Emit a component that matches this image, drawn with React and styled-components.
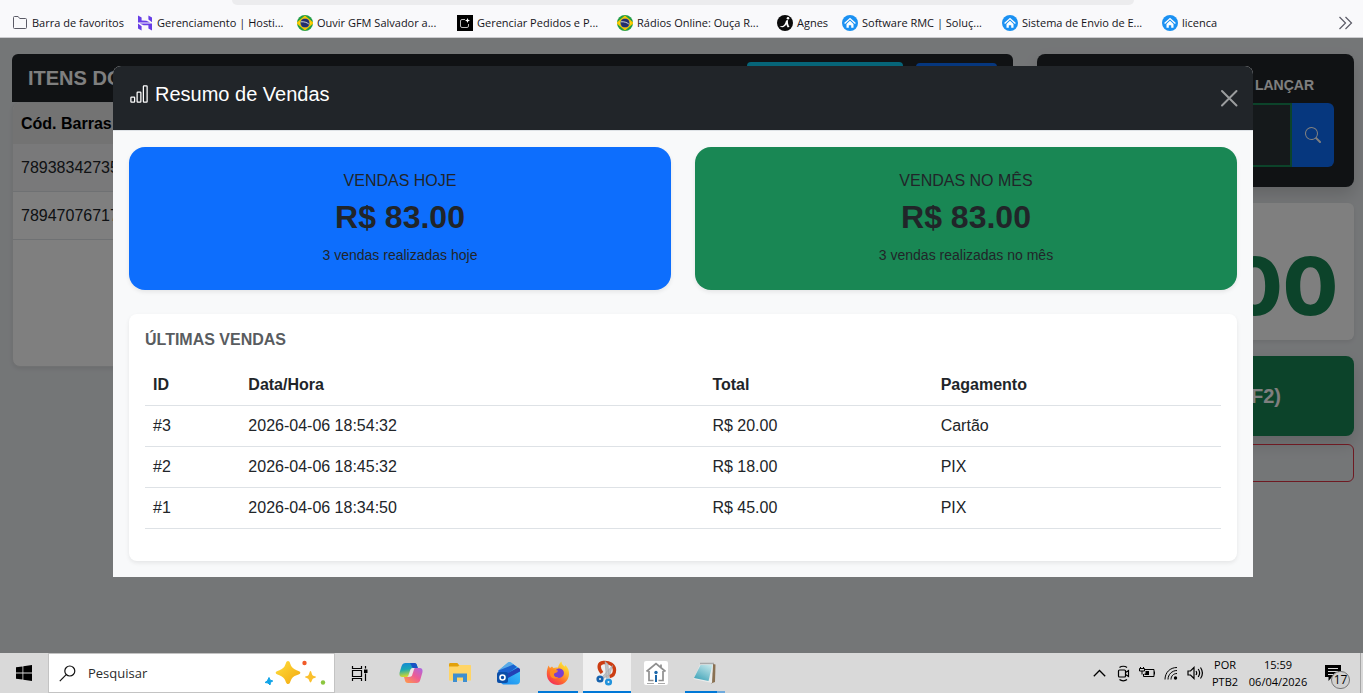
import styled, { createGlobalStyle } from "styled-components";
import { BsBarChart, BsSearch } from "react-icons/bs";

const GlobalStyle = createGlobalStyle`
  *, *::before, *::after {
    box-sizing: border-box;
  }
  body {
    margin: 0;
    font-family: "Liberation Sans", Arial, sans-serif;
    font-size: 16px;
    line-height: 24px;
    color: #212529;
  }
  button, input {
    font: inherit;
  }
  h1, h2, h3, p {
    margin: 0;
  }
`;

const systemFont = `"Open Sans", "Noto Sans", sans-serif`;

const Screen = styled.div`
  display: flex;
  flex-direction: column;
  min-height: 100vh;
`;

/* ---------- bookmarks bar ---------- */

const Browser = styled.header`
  background: #f9f9fb;
  border-bottom: 1px solid #cccccf;
`;

const AddressBar = styled.div`
  height: 5px;
  margin: 0 229px 0 232px;
  border-radius: 0 0 5px 5px;
  background: #ececee;
`;

const Bookmarks = styled.nav`
  display: flex;
  align-items: center;
  height: 32px;
  padding: 4px 10px 0 12px;
`;

const Bookmark = styled.a`
  display: flex;
  flex: none;
  align-items: center;
  gap: 4px;
  width: ${({ $width }) => $width}px;
  font-family: ${systemFont};
  font-size: 11px;
  line-height: 16px;
  color: #15141a;
  text-decoration: none;
  white-space: nowrap;
`;

const MoreBookmarks = styled.button`
  display: flex;
  margin-left: auto;
  padding: 0;
  border: none;
  background: transparent;
`;

/* ---------- sales page ---------- */

const Page = styled.main`
  position: relative;
  flex: 1;
  display: grid;
  grid-template-columns: 1fr 317px;
  align-items: start;
  gap: 24px;
  padding: 16px 9px 16px 12px;
  background: #e9ecef;
`;

const ItemsHeader = styled.div`
  display: flex;
  align-items: center;
  gap: 13px;
  height: 48px;
  padding: 0 16px;
  border-radius: 6px 6px 0 0;
  background: #212529;
`;

const ItemsTitle = styled.h2`
  flex: 1;
  font-size: 20px;
  line-height: 24px;
  color: #fff;
`;

const HeaderBadge = styled.button`
  width: 156px;
  height: 32px;
  border: none;
  border-radius: 4px;
  background: #0dcaf0;
`;

const HeaderButton = styled.button`
  width: 81px;
  height: 30px;
  border: none;
  border-radius: 4px;
  background: #0d6efd;
`;

const ItemsCard = styled.div`
  min-height: 265px;
  border: 1px solid #e0e2e4;
  border-radius: 8px;
  overflow: hidden;
  background: #fff;
  box-shadow: 0 2px 4px rgba(0, 0, 0, 0.08);
`;

const ItemsTable = styled.table`
  width: 100%;
  border-spacing: 0;
  text-align: left;

  th {
    height: 41px;
    padding: 0 8px;
    background: #e6e6e7;
    color: #000;
  }
  td {
    height: 48px;
    padding: 0 8px;
    border-bottom: 1px solid #dee2e6;
  }
  tr:nth-child(odd) td {
    background: #f3f3f4;
  }
`;

const Side = styled.aside`
  display: flex;
  flex-direction: column;
`;

const ScanCard = styled.div`
  padding: 20px;
  margin-bottom: 16px;
  border-radius: 8px;
  background: #212529;
  box-shadow: 0 8px 16px rgba(0, 0, 0, 0.15);
`;

const ScanLabel = styled.label`
  display: block;
  padding: 0 20px 6px 0;
  font-size: 14px;
  font-weight: bold;
  line-height: 23px;
  text-align: right;
  color: #fff;
`;

const ScanGroup = styled.div`
  display: flex;
  height: 64px;
`;

const ScanInput = styled.input`
  flex: 1;
  min-width: 0;
  border: 2px solid #198754;
  border-radius: 6px 0 0 6px;
  background: #2b3337;
  color: #fff;
`;

const ScanButton = styled.button`
  display: flex;
  align-items: center;
  justify-content: center;
  width: 42px;
  border: none;
  border-radius: 0 6px 6px 0;
  background: #0d6efd;
  color: #fff;
`;

const TotalCard = styled.div`
  display: flex;
  align-items: flex-end;
  justify-content: flex-end;
  height: 137px;
  margin-bottom: 16px;
  padding: 0 16px 6px;
  border-radius: 6px;
  background: #fff;
  box-shadow: 0 2px 4px rgba(0, 0, 0, 0.08);
`;

const TotalValue = styled.span`
  font-family: Inter, sans-serif;
  font-size: 80px;
  font-weight: 800;
  line-height: 96px;
  color: #198754;
`;

const FinishButton = styled.button`
  height: 80px;
  margin-bottom: 8px;
  padding: 0 73px;
  border: none;
  border-radius: 8px;
  background: #198754;
  color: #fff;
  font-size: 20px;
  font-weight: bold;
  text-align: right;
  box-shadow: 0 8px 16px rgba(0, 0, 0, 0.15);
`;

const CancelButton = styled.button`
  height: 38px;
  border: 1px solid #dc3545;
  border-radius: 6px;
  background: transparent;
`;

/* ---------- modal ---------- */

const Backdrop = styled.div`
  position: absolute;
  inset: 0;
  padding: 28px 0 28px 3px;
  background: rgba(0, 0, 0, 0.5);
`;

const Modal = styled.section`
  max-width: 1140px;
  margin: 0 auto;
  border-radius: 8px 8px 0 0;
  overflow: hidden;
  background: #f8f9fa;
`;

const ModalHeader = styled.div`
  display: flex;
  align-items: center;
  justify-content: space-between;
  padding: 16px 15px 16px 16px;
  border-bottom: 1px solid #dee2e6;
  background: #212529;
  color: #fff;
`;

const ModalTitle = styled.h1`
  display: flex;
  align-items: center;
  gap: 6px;
  margin-bottom: 8px;
  font-size: 20px;
  font-weight: normal;
  line-height: 24px;
`;

const CloseButton = styled.button`
  display: flex;
  padding: 0;
  border: none;
  background: transparent;
  color: #fff;
  opacity: 0.55;
`;

const ModalBody = styled.div`
  display: flex;
  flex-direction: column;
  gap: 24px;
  padding: 16px;
`;

const Cards = styled.div`
  display: grid;
  grid-template-columns: 1fr 1fr;
  gap: 24px;
`;

const Card = styled.article`
  display: flex;
  flex-direction: column;
  align-items: center;
  gap: 8px;
  padding: 24px;
  border-radius: 16px;
  background: ${({ $color }) => $color};
  box-shadow: 0 2px 4px rgba(0, 0, 0, 0.08);
`;

const CardLabel = styled.h2`
  font-size: 16px;
  font-weight: normal;
  line-height: 19px;
`;

const CardValue = styled.p`
  font-size: 32px;
  font-weight: bold;
  line-height: 38px;
`;

const CardNote = styled.p`
  font-size: 14px;
  line-height: 22px;
`;

const Latest = styled.div`
  padding: 16px;
  border-radius: 8px;
  background: #fff;
  box-shadow: 0 2px 4px rgba(0, 0, 0, 0.08);
`;

const LatestTitle = styled.h2`
  margin-bottom: 16px;
  font-size: 16px;
  line-height: 19px;
  color: #595c5f;
`;

const SalesTable = styled.table`
  width: 100%;
  margin-bottom: 16px;
  border-spacing: 0;
  text-align: left;

  th, td {
    padding: 8px;
    border-bottom: 1px solid #dee2e6;
  }
`;

/* ---------- taskbar ---------- */

const Taskbar = styled.footer`
  display: flex;
  align-items: stretch;
  height: 40px;
  background: #d9d9d9;
  font-family: ${systemFont};
  color: #000;
`;

const TaskButton = styled.button`
  position: relative;
  display: flex;
  align-items: center;
  justify-content: center;
  width: 48px;
  padding: 0;
  border: none;
  background: ${({ $active }) => ($active ? "#f0f0f0" : "transparent")};
`;

const Underline = styled.span`
  position: absolute;
  bottom: 0;
  left: ${({ $full }) => ($full ? 0 : 4)}px;
  right: ${({ $full }) => ($full ? 0 : 4)}px;
  height: 2px;
  background: ${({ $stacked }) =>
    $stacked ? "linear-gradient(90deg, #0078d7 80%, #6fabde 80%)" : "#0078d7"};
`;

const SearchBox = styled.label`
  display: flex;
  align-items: center;
  gap: 12px;
  width: 287px;
  padding: 0 8px 0 10px;
  border: 1px solid #c3c3c3;
  background: #fff;
`;

const SearchInput = styled.input`
  flex: 1;
  min-width: 0;
  padding: 0;
  border: none;
  background: transparent;
  font-size: 13px;
  line-height: 20px;
  color: #2b2b2b;

  &::placeholder {
    color: #2b2b2b;
    opacity: 1;
  }
`;

const Apps = styled.div`
  display: flex;
  gap: 1px;
  margin-left: 4px;
`;

const Tray = styled.div`
  display: flex;
  align-items: center;
  margin-left: auto;
`;

const TrayButton = styled.button`
  display: flex;
  align-items: center;
  justify-content: center;
  width: 24px;
  height: 40px;
  padding: 0;
  border: none;
  background: transparent;
`;

const TrayText = styled.div`
  width: ${({ $width }) => $width}px;
  font-size: 11px;
  line-height: 17px;
  text-align: center;
`;

const Notifications = styled.button`
  position: relative;
  display: flex;
  align-items: center;
  justify-content: center;
  width: 40px;
  height: 40px;
  margin-right: 7px;
  padding: 0;
  border: none;
  background: transparent;
`;

const Count = styled.span`
  position: absolute;
  left: 18px;
  top: 18px;
  width: 19px;
  height: 18px;
  border: 1px solid #777;
  border-radius: 9px;
  background: #d0d0d0;
  font-size: 12px;
  line-height: 16px;
  text-align: center;
`;

const DesktopEdge = styled.div`
  width: 3px;
  height: 40px;
  border-left: 1px solid #a5a5a5;
`;

/* ---------- icons ---------- */

const FolderIcon = () => (
  <svg width="16" height="16" viewBox="0 0 16 16" fill="none" stroke="#5b5b66">
    <path d="M1.5 12.5v-10a1 1 0 0 1 1-1h3.6l1.6 2h5.8a1 1 0 0 1 1 1v8a1 1 0 0 1-1 1h-11a1 1 0 0 1-1-1z" />
  </svg>
);

const HostingIcon = () => (
  <svg width="16" height="16" viewBox="0 0 16 16" fill="#673de6">
    <path d="M1 7.4V.5l3.6 2v3.1l4.8.1 3.8 1.7zM11.4 4.6V.5L15 2.4v4.9zM11.4 13.4v-3.1l-4.8-.1-3.9-1.7H15v6.9zM1 8.6l3.6 2.7v4.2L1 13.6z" />
  </svg>
);

const BrazilIcon = () => (
  <svg width="16" height="16" viewBox="0 0 16 16">
    <circle cx="8" cy="8" r="8" fill="#229e45" />
    <path d="M8 1.6 15.6 8 8 14.4.4 8z" fill="#f8e509" stroke="#f8c300" strokeWidth="1.5" />
    <circle cx="8" cy="8" r="4.6" fill="#2b49a3" />
    <circle cx="8" cy="8" r="4" fill="#252f6b" />
    <path d="M4 6.8c3-.3 5.8.6 7.8 2.2" fill="none" stroke="#dfe4ee" strokeWidth=".9" />
  </svg>
);

const OrdersIcon = () => (
  <svg width="16" height="16" viewBox="0 0 16 16">
    <path d="M0 0h16v16H0z" fill="#000" />
    <path d="M8 4.5H5A1.5 1.5 0 0 0 3.5 6v5A1.5 1.5 0 0 0 5 12.5h5a1.5 1.5 0 0 0 1.5-1.5V9" fill="none" stroke="#bbb" />
    <path d="m10.5 3 .7 1.8 1.8.7-1.8.7-.7 1.8-.7-1.8L8 5.5l1.8-.7z" fill="#fff" />
  </svg>
);

const AgnesIcon = () => (
  <svg width="16" height="16" viewBox="0 0 16 16">
    <circle cx="8" cy="8" r="8" fill="#0b0b0b" />
    <path d="M2.5 11.2c3.5.6 5.5-1.2 6.6-5.7l2-.5c-.6 3 .2 5 1.4 6.8l-1.7.7c-.8-1-1.3-2-1.4-3.2-1.5 2.7-4 3.8-6.9 1.9z" fill="#fff" />
    <circle cx="11" cy="3.3" r="1.3" fill="#fff" />
  </svg>
);

const HomeIcon = () => (
  <svg width="16" height="16" viewBox="0 0 16 16">
    <circle cx="8" cy="8" r="8" fill="#1b91f2" />
    <path d="M2.6 8.6 8 3.6l5.4 5" fill="none" stroke="#fff" strokeWidth="1.4" />
    <path d="M4.5 9 8 5.8 11.5 9v3.7H9.2v-2.5H6.8v2.5H4.5z" fill="#fff" />
  </svg>
);

const DoubleChevron = () => (
  <svg width="15" height="14" viewBox="0 0 15 14" fill="none" stroke="#5b5b66" strokeWidth="1.2">
    <path d="m1.5 1 6 6-6 6M7.5 1l6 6-6 6" />
  </svg>
);

const CloseIcon = () => (
  <svg width="18" height="18" viewBox="0 0 18 18" fill="none" stroke="currentColor" strokeWidth="2" strokeLinecap="round">
    <path d="m2 2 14.5 14.5M16.5 2 2 16.5" />
  </svg>
);

const WindowsIcon = () => (
  <svg width="16" height="16" viewBox="0 0 16 16" fill="#000">
    <path d="M0 2.3 6.5 1.4v6.2H0zM7.3 1.3 16 0v7.6H7.3zM0 8.4h6.5v6.2L0 13.7zM7.3 8.4H16V16l-8.7-1.3z" />
  </svg>
);

const LensIcon = () => (
  <svg width="17" height="17" viewBox="0 0 17 17" fill="none" stroke="#111" strokeWidth="1.2">
    <circle cx="10.8" cy="6" r="5" />
    <path d="M7.2 9.7.8 16.2" />
  </svg>
);

const SparkleIcon = () => (
  <svg width="62" height="28" viewBox="0 0 62 28">
    <defs>
      <linearGradient id="spark" x1="0" y1="0" x2="1" y2="1">
        <stop offset="0" stopColor="#ffdf3d" />
        <stop offset="1" stopColor="#f3a70f" />
      </linearGradient>
    </defs>
    <path d="M24 2c2 0 2 3 3.5 5.5S32 11 34.5 12s2.5 2.6 0 3.5-5.5 1.5-7 4.5-1.5 5-3.5 5-2-2.5-3.5-5-4.5-3.5-7-4.5-2.5-2.5 0-3.5 5.5-2 7-4.5S22 2 24 2z" fill="url(#spark)" />
    <path d="M46.5 12c1 0 1.2 3.7 2.3 4.4s3.2.8 3.2 1.6-2.2 1-3.2 1.7-1.3 3.8-2.3 3.8-1.2-3-2.3-3.8-3.2-.9-3.2-1.7 2.2-1 3.2-1.6 1.3-4.4 2.3-4.4z" fill="#fbc02d" />
    <path d="m5 18.5 1 2.5 2.8 1-2.3 1.3L6 26l-2-2-3-.5 2.3-1.6z" fill="#11a4e8" stroke="#11a4e8" strokeLinejoin="round" />
    <circle cx="40.5" cy="4" r="2.2" fill="#f15a29" />
    <circle cx="59" cy="23.5" r="2.2" fill="#8cc63f" />
  </svg>
);

const TaskViewIcon = () => (
  <svg width="17" height="17" viewBox="0 0 17 17" fill="none" stroke="#000" strokeWidth="1.2">
    <path d="M1.5 5.5h9v6h-9zM1.5 1v2.5h9V1M1.5 16v-2.5h9V16M14.5 1v2.5M14.5 8.5V16" />
    <path d="M13 4.5h3.5V8H13z" fill="#000" stroke="none" />
  </svg>
);

const CopilotIcon = () => (
  <svg width="24" height="22" viewBox="0 0 24 22">
    <defs>
      <linearGradient id="copA" x1="0" y1="0" x2=".2" y2="1">
        <stop offset="0" stopColor="#1386d8" />
        <stop offset=".5" stopColor="#1aa8b4" />
        <stop offset="1" stopColor="#d5d92c" />
      </linearGradient>
      <linearGradient id="copB" x1="1" y1="0" x2=".1" y2="1">
        <stop offset="0" stopColor="#a667e8" />
        <stop offset=".5" stopColor="#ee5b93" />
        <stop offset="1" stopColor="#ff9a4b" />
      </linearGradient>
    </defs>
    <path d="M6.5 1H15c2 0 2.6 1.2 3.2 3.2L18.8 6H14c-2 0-2.7 1.3-3.3 3.4L9.5 13c-.5 1.5-1 2-2.5 2H3.5C.8 15 0 13 .6 10.5l2-6.500C3.3 2 4.5 1 6.5 1z" fill="url(#copA)" />
    <path d="M11 1h4.5c1.5 0 2.3 1.2 2.7 3l.6 2H14.5c-1 0-1.7-1-2-2.2z" fill="#1852c4" />
    <path d="M17.5 21H9c-2 0-2.7-1-3.2-3.2L5 15h4.5c2 0 2.8-1 3.4-3.2L14.2 8c.5-1.5 1-2 2.5-2h3.8c2.7 0 3.5 2 2.9 4.5L21.5 17c-.7 3-2 4-4 4z" fill="url(#copB)" />
    <path d="M9.5 14.5 12 7.5c.4-1 1-1.5 2-1.5h1.5L13 13.5c-.4.8-.9 1-1.5 1z" fill="#ece4e6" />
  </svg>
);

const ExplorerIcon = () => (
  <svg width="22" height="20" viewBox="0 0 22 20">
    <path d="M0 1.5C0 .7.5 0 1.3 0h7L10 2h11v4H0z" fill="#e2a10b" />
    <path d="M0 3.5h9L10.5 2H21c.6 0 1 .4 1 1v14.5H0z" fill="#ffd567" />
    <path d="M4 10.5h14V19h-4v-4.5H8V19H4z" fill="#3e8fd0" />
  </svg>
);

const OutlookIcon = () => (
  <svg width="24" height="24" viewBox="0 0 24 24">
    <defs>
      <linearGradient id="mail" x1="1" y1="0" x2=".3" y2="1">
        <stop offset="0" stopColor="#49d2fb" />
        <stop offset="1" stopColor="#1b8df0" />
      </linearGradient>
    </defs>
    <path d="M1.5 9.5 11 1.5c1-.7 2-.7 3 0L23 8v12c0 2-1.5 3.5-3.5 3.5H6L1.5 20z" fill="url(#mail)" />
    <path d="M1.5 9.5 11 1.5c1-.7 2-.7 3 0L18 5 4 12z" fill="#5aa9e6" />
    <path d="M1.5 9.5 16.5 3.5 20 6 9 13.5 1.5 12z" fill="#1a62cf" />
    <path d="M8 13.5 21 6.5l2 1.5v2.5L11 17z" fill="#2340b4" />
    <rect x="0" y="11" width="11" height="11" rx="2" fill="#0b4fa8" />
    <circle cx="5.5" cy="16.5" r="2.5" fill="none" stroke="#fff" strokeWidth="1.6" />
  </svg>
);

const FirefoxIcon = () => (
  <svg width="24" height="24" viewBox="0 0 24 24">
    <defs>
      <linearGradient id="fox" x1=".85" y1="0" x2=".2" y2="1">
        <stop offset="0" stopColor="#fff03d" />
        <stop offset=".35" stopColor="#ffb52a" />
        <stop offset=".65" stopColor="#ff6a2e" />
        <stop offset="1" stopColor="#f2265e" />
      </linearGradient>
    </defs>
    <path d="M2.5 4.5 4 7l2-1.5L7.500 7c1.5-1 4.5-.5 4.500-.5C12.5 4 14 1.5 15.5.5c0 3 1.5 3.5 3 5 .5 0 .8-.7.8-1.5 3 3 4 6 3.7 9.5C22.5 19.5 18 24 12 24S.8 19.5.8 13c0-3.5.7-6 1.7-8.500z" fill="url(#fox)" />
    <path d="M7.5 12c.5-1.5 3-.5 4.5-2.3 0 0-1-.7-2.3-.4 2-2.8 6.5-2.4 7.8.8 1.5 4-1.5 7-5 7S7 14.5 7.5 12z" fill="#7a3fd0" />
    <path d="M5 8.500c1.5-.5 3.5 0 4.5 1.2 1 .6 2 .3 2.5.5-1 1.8-3.5 1.5-4 2.8-.4 2 1.5 4 4.5 3-1.5 2.5-8 2.5-8.5-3-.1-1.5 0-3 1-4.500z" fill="#ff8f1f" />
  </svg>
);

const SnipIcon = () => (
  <svg width="22" height="26" viewBox="0 0 22 26">
    <path d="M6 13C2 8 2 3 7.500 2.500c6-.5 11 2.500 11 7.500 0 3.500-2 6-5 6.500" fill="none" stroke="#cc3d12" strokeWidth="3.400" />
    <path d="M9 1.500 12 4l1 13-2.500 1.500zM16.500 5.500 14 14l-6.500 4.500-1-2z" fill="#c0c3c6" stroke="#a3a7ac" strokeWidth=".6" />
    <circle cx="4" cy="19" r="2.300" fill="none" stroke="#1763ae" strokeWidth="2.600" />
    <circle cx="12.500" cy="22" r="2.300" fill="none" stroke="#2293dc" strokeWidth="2.600" />
  </svg>
);

const HouseIcon = () => (
  <svg width="24" height="24" viewBox="0 0 24 24">
    <rect width="24" height="24" rx="2" fill="#fff" />
    <path d="m2.5 10.5 9.5-8 9.5 8M5 10v9.5h4.5M19 10v9.5h-4.5M17 3.5v3" fill="none" stroke="#8e8e8e" strokeWidth="1.7" />
    <circle cx="12" cy="11.5" r="1.7" fill="#1b67a9" />
    <path d="M12 14v7" stroke="#1b67a9" strokeWidth="2" />
    <path d="M3 22.5h7M14 22.5h7" stroke="#aaa" />
  </svg>
);

const NotepadIcon = () => (
  <svg width="24" height="22" viewBox="0 0 24 22">
    <defs>
      <linearGradient id="pad" x1=".8" y1="0" x2=".2" y2="1">
        <stop offset="0" stopColor="#c3e6ea" />
        <stop offset="1" stopColor="#3fa3b8" />
      </linearGradient>
    </defs>
    <path d="m20 2 2.5.5L22 20l-4 1.5z" fill="#8a7152" />
    <path d="M7 2.5 20 1.5 19 21 .5 17z" fill="#e9ecec" />
    <path d="M7.5 3 19.5 2.5 15.5 19 1 16z" fill="url(#pad)" />
    <path d="M7.5 1.5h13" stroke="#777" strokeWidth="1.5" strokeDasharray="1 1" />
  </svg>
);

const ChevronUp = () => (
  <svg width="13" height="8" viewBox="0 0 13 8" fill="none" stroke="#000" strokeWidth="1.3">
    <path d="m.8 7.2 5.7-5.7 5.7 5.7" />
  </svg>
);

const MeetIcon = () => (
  <svg width="13" height="17" viewBox="0 0 13 17" fill="none" stroke="#000" strokeWidth="1.2">
    <rect x="1.5" y="5" width="7" height="7" rx="1" />
    <path d="m8.5 7.500 3-2v6l-3-2M2.5 2.500C4.5.8 8 .8 10 2.500M2.5 14.500c2 1.700 5.500 1.700 7.500 0" />
  </svg>
);

const BatteryIcon = () => (
  <svg width="17" height="12" viewBox="0 0 17 12" fill="none" stroke="#000">
    <path d="M5.5 2.500h9.500v7H4.500V7M15.500 4.500v3" />
    <path d="M6.5 4H10v4H5.500V6.500h1z" fill="#000" stroke="none" />
    <path d="M1.5 0v1.500M4.500 0v1.500M.5 1.500h5V4H.5zM3 4v3.500" />
  </svg>
);

const WifiIcon = () => (
  <svg width="14" height="14" viewBox="0 0 14 14" fill="none" stroke="#000">
    <path d="M1 13.5C1 6.5 6 1.5 13 1.500M4 13.500c0-5 4-9 9-9M7 13.500c0-3.500 2.500-6 6-6" />
    <circle cx="11.5" cy="12" r="1.7" fill="#000" stroke="none" />
  </svg>
);

const SoundIcon = () => (
  <svg width="17" height="14" viewBox="0 0 17 14" fill="none" stroke="#000" strokeWidth="1.2">
    <path d="M1 5h2.500L7 1.500v11L3.500 9H1zM9 5c.8 1.200.8 2.800 0 4M11.200 3c1.700 2.400 1.700 5.600 0 8M13.500 1.500c2.300 3.300 2.300 7.700 0 11" />
  </svg>
);

const MessageIcon = () => (
  <svg width="16" height="16" viewBox="0 0 16 16">
    <path d="M0 0h16v12H7l-3.500 4V12H0z" fill="#000" />
    <path d="M3 3.500h10M3 6.500h10M3 9.500h6" stroke="#d9d9d9" />
  </svg>
);

const bookmarks = [
  { label: "Barra de favoritos", icon: FolderIcon, width: 125 },
  { label: "Gerenciamento | Hosti...", icon: HostingIcon, width: 160 },
  { label: "Ouvir GFM Salvador a...", icon: BrazilIcon, width: 160 },
  { label: "Gerenciar Pedidos e P...", icon: OrdersIcon, width: 160 },
  { label: "Rádios Online: Ouça R...", icon: BrazilIcon, width: 160 },
  { label: "Agnes", icon: AgnesIcon, width: 65 },
  { label: "Software RMC | Soluç...", icon: HomeIcon, width: 160 },
  { label: "Sistema de Envio de E...", icon: HomeIcon, width: 160 },
  { label: "licenca", icon: HomeIcon, width: 60 },
];

const items = ["78938342735", "78947076717"];

const cards = [
  { label: "VENDAS HOJE", value: "R$ 83.00", note: "3 vendas realizadas hoje", color: "#0d6efd" },
  { label: "VENDAS NO MÊS", value: "R$ 83.00", note: "3 vendas realizadas no mês", color: "#198754" },
];

const sales = [
  { id: 3, date: "2026-04-06 18:54:32", total: "20.00", payment: "Cartão" },
  { id: 2, date: "2026-04-06 18:45:32", total: "18.00", payment: "PIX" },
  { id: 1, date: "2026-04-06 18:34:50", total: "45.00", payment: "PIX" },
];

const apps = [
  { name: "Copilot", icon: CopilotIcon },
  { name: "Explorador de Arquivos", icon: ExplorerIcon },
  { name: "Outlook", icon: OutlookIcon },
  { name: "Firefox", icon: FirefoxIcon, open: true },
  { name: "Ferramenta de Captura", icon: SnipIcon, open: true, active: true },
  { name: "Casa", icon: HouseIcon },
  { name: "Bloco de Notas", icon: NotepadIcon, open: true, stacked: true },
];

const tray = [
  { name: "Mostrar ícones ocultos", icon: ChevronUp },
  { name: "Reunir agora", icon: MeetIcon },
  { name: "Bateria", icon: BatteryIcon },
  { name: "Rede", icon: WifiIcon },
  { name: "Volume", icon: SoundIcon },
];

const SalesSummary = () => (
  <Modal role="dialog" aria-labelledby="summary-title">
    <ModalHeader>
      <ModalTitle id="summary-title">
        <BsBarChart />
        Resumo de Vendas
      </ModalTitle>
      <CloseButton aria-label="Fechar">
        <CloseIcon />
      </CloseButton>
    </ModalHeader>
    <ModalBody>
      <Cards>
        {cards.map((card) => (
          <Card key={card.label} $color={card.color}>
            <CardLabel>{card.label}</CardLabel>
            <CardValue>{card.value}</CardValue>
            <CardNote>{card.note}</CardNote>
          </Card>
        ))}
      </Cards>
      <Latest>
        <LatestTitle>ÚLTIMAS VENDAS</LatestTitle>
        <SalesTable>
          <thead>
            <tr>
              <th>ID</th>
              <th>Data/Hora</th>
              <th>Total</th>
              <th>Pagamento</th>
            </tr>
          </thead>
          <tbody>
            {sales.map((sale) => (
              <tr key={sale.id}>
                <td>#{sale.id}</td>
                <td>{sale.date}</td>
                <td>R$ {sale.total}</td>
                <td>{sale.payment}</td>
              </tr>
            ))}
          </tbody>
        </SalesTable>
      </Latest>
    </ModalBody>
  </Modal>
);

const App = () => {
  return (
    <Screen>
      <GlobalStyle />
      <Browser>
        <AddressBar />
        <Bookmarks>
          {bookmarks.map(({ label, icon: Icon, width }) => (
            <Bookmark key={label} href="#" $width={width}>
              <Icon />
              {label}
            </Bookmark>
          ))}
          <MoreBookmarks aria-label="Mais favoritos">
            <DoubleChevron />
          </MoreBookmarks>
        </Bookmarks>
      </Browser>

      <Page>
        <section>
          <ItemsHeader>
            <ItemsTitle>ITENS DO</ItemsTitle>
            <HeaderBadge aria-label="Resumo" />
            <HeaderButton aria-label="Produtos" />
          </ItemsHeader>
          <ItemsCard>
            <ItemsTable>
              <thead>
                <tr>
                  <th>Cód. Barras</th>
                </tr>
              </thead>
              <tbody>
                {items.map((code) => (
                  <tr key={code}>
                    <td>{code}</td>
                  </tr>
                ))}
              </tbody>
            </ItemsTable>
          </ItemsCard>
        </section>

        <Side>
          <ScanCard>
            <ScanLabel htmlFor="scan">LANÇAR</ScanLabel>
            <ScanGroup>
              <ScanInput id="scan" />
              <ScanButton aria-label="Buscar">
                <BsSearch />
              </ScanButton>
            </ScanGroup>
          </ScanCard>
          <TotalCard>
            <TotalValue>00</TotalValue>
          </TotalCard>
          <FinishButton>(F2)</FinishButton>
          <CancelButton aria-label="Cancelar" />
        </Side>

        <Backdrop>
          <SalesSummary />
        </Backdrop>
      </Page>

      <Taskbar>
        <TaskButton aria-label="Iniciar">
          <WindowsIcon />
        </TaskButton>
        <SearchBox>
          <LensIcon />
          <SearchInput placeholder="Pesquisar" aria-label="Pesquisar" />
          <SparkleIcon />
        </SearchBox>
        <TaskButton aria-label="Visão de tarefas">
          <TaskViewIcon />
        </TaskButton>
        <Apps>
          {apps.map(({ name, icon: Icon, open, active, stacked }) => (
            <TaskButton key={name} aria-label={name} $active={active}>
              <Icon />
              {open && <Underline $full={active} $stacked={stacked} />}
            </TaskButton>
          ))}
        </Apps>
        <Tray>
          {tray.map(({ name, icon: Icon }) => (
            <TrayButton key={name} aria-label={name}>
              <Icon />
            </TrayButton>
          ))}
          <TrayText $width={36}>
            POR
            <br />
            PTB2
          </TrayText>
          <TrayText $width={70}>
            15:59
            <br />
            06/04/2026
          </TrayText>
          <Notifications aria-label="Notificações">
            <MessageIcon />
            <Count>17</Count>
          </Notifications>
          <DesktopEdge />
        </Tray>
      </Taskbar>
    </Screen>
  );
};

export default App;
